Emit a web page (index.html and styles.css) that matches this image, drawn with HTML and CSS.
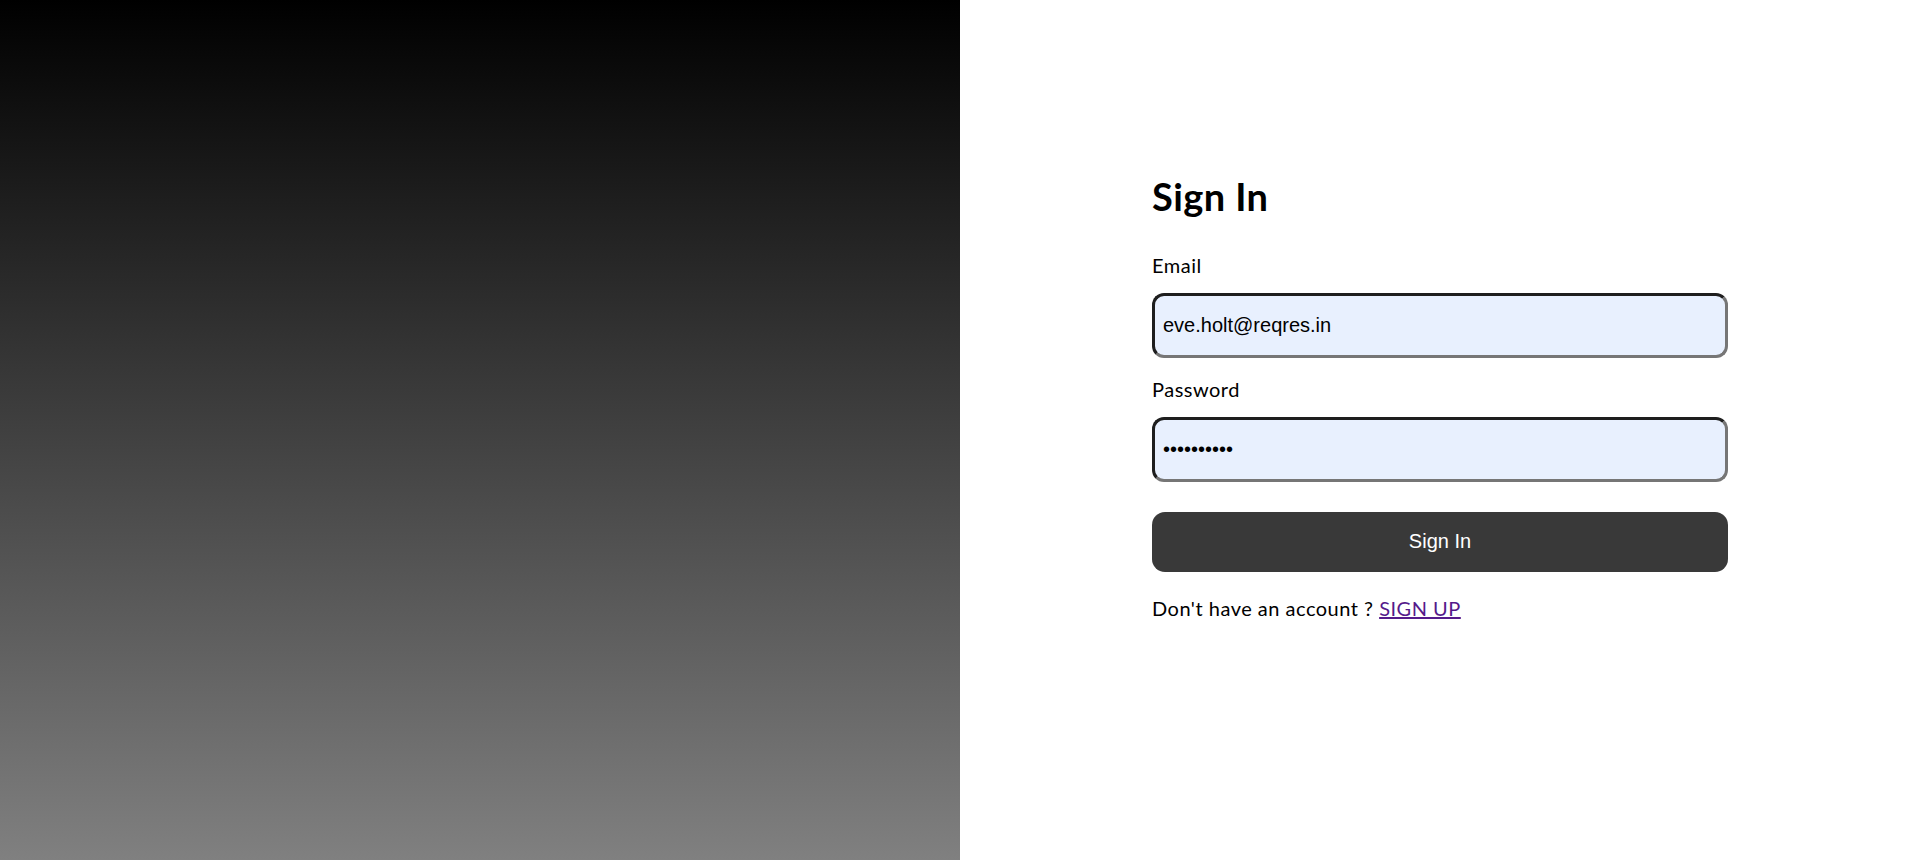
FILE: index.html
```html
<!DOCTYPE html>
<html lang="en">
<head>
<meta charset="utf-8">
<title>Sign In</title>
<link rel="stylesheet" href="styles.css">
</head>
<body>
<main class="auth">
  <section class="hero" aria-hidden="true"></section>
  <section class="panel">
    <form class="form" onsubmit="return false;">
      <h1 class="title">Sign In</h1>
      <label class="field-label" for="email">Email</label>
      <input class="field" id="email" type="email" value="eve.holt@reqres.in">
      <label class="field-label field-label--gap" for="password">Password</label>
      <input class="field" id="password" type="password" value="cityslicka">
      <button class="submit" type="submit">Sign In</button>
      <p class="switch">Don't have an account ? <a class="switch-link" href="#">SIGN UP</a></p>
    </form>
  </section>
</main>
</body>
</html>
```
FILE: styles.css
```css
* { box-sizing: border-box; }
html, body { margin: 0; padding: 0; }
body {
  font-family: "Lato", "Open Sans", sans-serif;
  color: #000;
  background: #fff;
}
.auth {
  display: flex;
  height: 100vh;
}
.hero {
  flex: 1 1 50%;
  background: linear-gradient(to bottom, #000000, #808080);
}
.panel {
  flex: 1 1 50%;
  display: flex;
  justify-content: center;
  align-items: flex-start;
  padding-top: 174px;
}
.form {
  width: 576px;
  display: flex;
  flex-direction: column;
}
.title {
  margin: 0 0 33px;
  font-size: 38px;
  line-height: 1.2;
  font-weight: 700;
  letter-spacing: 0.4px;
}
.field-label {
  font-size: 20px;
  line-height: 24px;
  margin-bottom: 16px;
  letter-spacing: 0.5px;
}
.field-label--gap { margin-top: 19px; }
.field {
  height: 65px;
  width: 100%;
  padding: 0 8px;
  border-width: 3px;
  border-style: solid;
  border-color: #1e1e1e #767676 #767676 #1e1e1e;
  border-radius: 12px;
  background: #e8f0fe;
  font-family: "Liberation Sans", Arial, sans-serif;
  font-size: 20px;
  color: #000;
  outline: none;
}
.submit {
  margin-top: 30px;
  height: 60px;
  width: 100%;
  border: none;
  border-radius: 13px;
  background: #393939;
  color: #fff;
  font-family: "Liberation Sans", Arial, sans-serif;
  font-size: 20px;
  cursor: pointer;
}
.switch {
  margin: 24px 0 0;
  font-size: 20px;
  line-height: 24px;
  letter-spacing: 0.5px;
}
.switch-link { color: #551a8b; }
```
